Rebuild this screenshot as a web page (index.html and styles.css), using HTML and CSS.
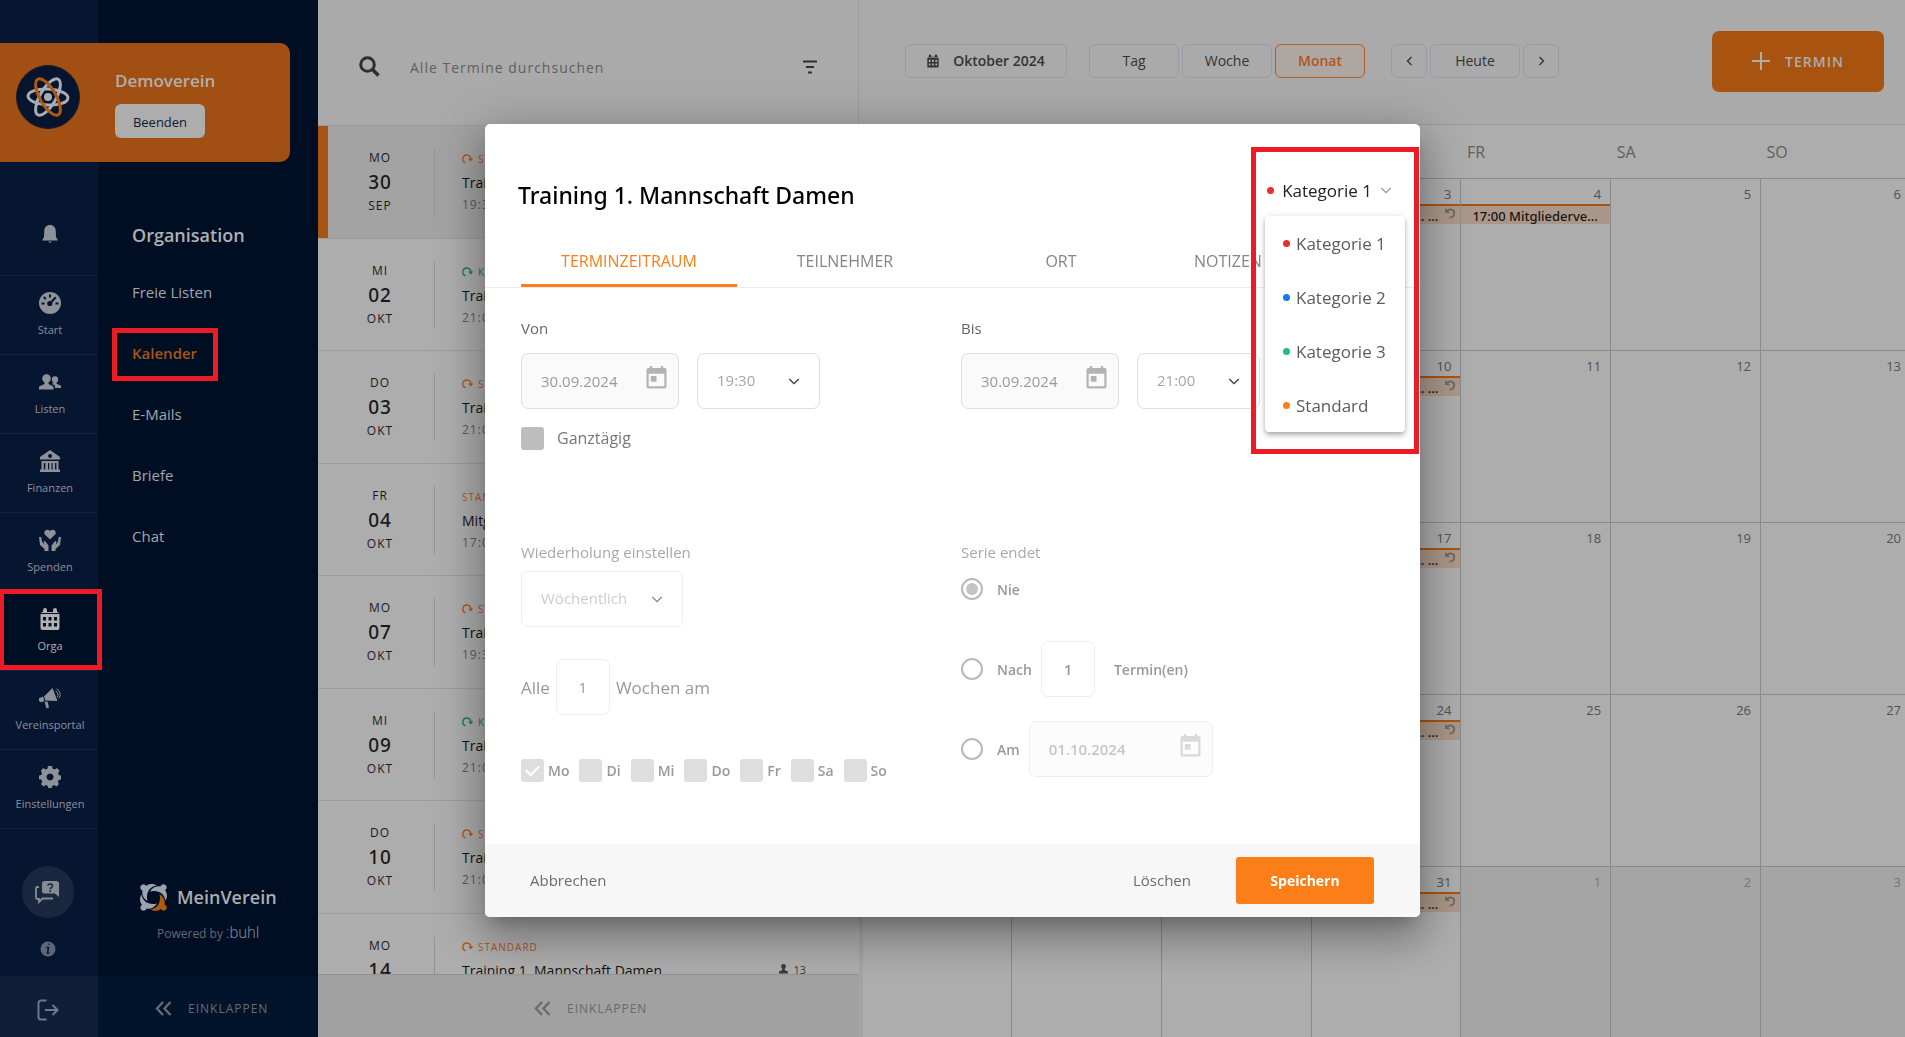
FILE: index.html
```html
<!DOCTYPE html>
<html lang="de">
<head>
<meta charset="utf-8">
<meta name="viewport" content="width=device-width, initial-scale=1">
<title>MeinVerein – Kalender</title>
<link rel="stylesheet" href="styles.css">
</head>
<body>
<svg class="sprite" aria-hidden="true">
  <symbol id="i-repeat" viewBox="0 0 12 10"><path d="M3.500 8.600H3A4 4 0 1 1 8.800 5.400" fill="none" stroke="currentColor" stroke-width="1.300"/><path d="M6.200 4.400h5L8.800 7.400z" fill="currentColor"/></symbol>
  <symbol id="i-undo" viewBox="0 0 12 12"><path d="M1 1v5h5z" fill="currentColor"/><path d="M3 3.600c4-2.400 7.600-.4 7.200 3C10 8.800 8 10.400 5.400 10.600" fill="none" stroke="currentColor" stroke-width="1.800"/></symbol>
  <symbol id="i-person" viewBox="0 0 10 11"><circle cx="5" cy="2.700" r="2.700" fill="currentColor"/><path d="M3.600 4h2.800v2.600L10 8.200V10.500H0V8.200l3.600-1.600z" fill="currentColor"/></symbol>
  <symbol id="i-down" viewBox="0 0 14 8"><path d="M1.500 1l5.500 5.500L12.500 1" fill="none" stroke="currentColor" stroke-width="1.500"/></symbol>
  <symbol id="i-double" viewBox="0 0 18 16"><path d="M8.500 1L2 8l6.500 7M16.500 1L10 8l6.500 7" fill="none" stroke="currentColor" stroke-width="2.400"/></symbol>
  <symbol id="i-date" viewBox="0 0 22 24"><path fill="currentColor" fill-rule="evenodd" d="M4 0h2.500v2h9V0H18v2h1.500A2 2 0 0 1 21.500 4v17.500a2 2 0 0 1-2 2h-17a2 2 0 0 1-2-2V4a2 2 0 0 1 2-2H4zM2.800 8v13.200h16.400V8zM5 10.500h6V16.500H5z"/></symbol>
  <symbol id="i-cal" viewBox="0 0 20 22"><path fill="currentColor" fill-rule="evenodd" d="M3 2a2 2 0 0 1 4 0v2h6V2a2 2 0 0 1 4 0v2h1.500v1H1.500V4H3zM0.500 6h19v14a2 2 0 0 1-2 2h-15a2 2 0 0 1-2-2zM3 9v3.500h3V9zm5.500 0v3.500h3V9zM14 9v3.500h3V9zM3 15v3.500h3V15zm5.500 0v3.500h3V15zm5.500 0v3.500h3V15z"/></symbol>
</svg>

<div class="app">
  <div class="sidebar">
    <nav class="rail" aria-label="Hauptnavigation">
      <ul class="rail-list">
        <li><a href="#" class="rail-item bell" aria-label="Benachrichtigungen">
          <svg width="16" height="18" viewBox="0 0 16 18"><path fill="currentColor" d="M8 0c3.600 0 5.600 2.400 5.800 6l.2 6 2 3.600H0L2 12l.2-6C2.400 2.400 4.400 0 8 0zM6 16.500h4L8 18z"/></svg></a></li>
        <li><a href="#" class="rail-item">
          <svg width="22" height="22" viewBox="0 0 22 22"><circle cx="11" cy="11" r="11" fill="currentColor"/><g stroke="#061631" stroke-width="2" fill="none"><path d="M2.500 11.500h3M16.500 11.500h3M11 2.500v3M4.800 5l2 2M11 11.500L16.800 5.200"/></g><circle cx="10.800" cy="11.500" r="2.600" fill="#061631"/></svg>
          <span>Start</span></a></li>
        <li><a href="#" class="rail-item">
          <svg width="22" height="22" viewBox="0 0 22 22"><g fill="currentColor"><circle cx="7.500" cy="7.500" r="4.300"/><path d="M5.500 10h4v3l5 2.500V18.500H0v-3L5.500 13z"/><circle cx="16" cy="8.500" r="3.200"/><path d="M14.800 11h2.800v1.800l4.400 2V17h-6v-2.400l-3-1.600z"/></g></svg>
          <span>Listen</span></a></li>
        <li><a href="#" class="rail-item">
          <svg width="22" height="22" viewBox="0 0 22 22"><path fill="currentColor" fill-rule="evenodd" d="M11 0l10 7v2.500H1V7zM11 4a2 2 0 1 0 .1 0zM2.500 11h17v8.500H21V22H1v-2.500h1.500zM4.800 13v6.500h1.500V13zm4.200 0v6.500h1.200V13zm3.500 0v6.500h1.200V13zm3.500 0v6.500h1.400V13z"/></svg>
          <span>Finanzen</span></a></li>
        <li><a href="#" class="rail-item">
          <svg width="22" height="22" viewBox="0 0 22 22"><g fill="currentColor"><path d="M11 10.500L5.800 5.500C3.800 3 7.500-1.500 11 2c3.500-3.500 7.200 1 5.200 3.500z"/><path d="M0 8l2.200 0 1 5 2 2.600L4.500 12.500 6 12l3.500 4.500V22H5.500V20L1 16zM22 8l-2.200 0-1 5-2 2.600.7-3.100L16 12l-3.500 4.500V22h4V20L21 16z"/></g></svg>
          <span>Spenden</span></a></li>
        <li><a href="#" class="rail-item active" aria-current="page">
          <svg width="20" height="22"><use href="#i-cal"/></svg>
          <span>Orga</span></a></li>
        <li><a href="#" class="rail-item">
          <svg width="22" height="22" viewBox="0 0 22 22"><g fill="currentColor"><path d="M13.500 1L18.500 14 6.500 13.500 5 9.500z"/><path d="M4 9.500L5.500 14 2 15.200A2.500 2.500 0 0 1 .4 11z"/><path d="M5.500 14.800l3-.3L10 20.500l-2.500 1z"/></g><path d="M16.500 4a4 4 0 0 1 1.700 6M17.500 1.800a6.500 6.500 0 0 1 2.500 9.500" fill="none" stroke="currentColor"/></svg>
          <span>Vereinsportal</span></a></li>
        <li><a href="#" class="rail-item">
          <svg width="22" height="22" viewBox="0 0 22 22"><path fill="currentColor" fill-rule="evenodd" d="M9 0h4l.6 2.800 2 .8L18 2l2.500 2.800-1.400 2.400.8 2 2.100.4v3.800l-2.300.5-.8 1.800L20 18l-2.500 2.500-2.400-1.400-1.800.8L12.800 22H9.200l-.5-2.100-1.800-.8L4.500 20.500 2 18l1.300-2.300-.8-1.900L0 13.300V9.600l2.300-.5.8-1.900L1.800 4.800 4.300 2l2.300 1.500 1.800-.8zM11 7.500a3.500 3.500 0 1 0 .1 0z"/></svg>
          <span>Einstellungen</span></a></li>
      </ul>
      <div class="rail-extra">
        <button class="help" aria-label="Hilfe"><svg width="26" height="24" viewBox="0 0 26 24"><path fill="currentColor" fill-rule="evenodd" d="M9.500 1h12A2.500 2.500 0 0 1 24 3.500v13.500l-4-3.500H9.500A2.500 2.500 0 0 1 7 11V3.500A2.500 2.500 0 0 1 9.500 1z"/><path d="M12.800 5.600c.6-2.200 5-2 4.800.4-.2 1.600-2.300 1.500-2.300 3.200M15.200 10.300v1.700" fill="none" stroke="#19273f" stroke-width="1.600"/><path d="M4 7H2.500A1.500 1.500 0 0 0 1 8.500v9A1.500 1.500 0 0 0 2.500 19H4v3l3.500-3.500H18" fill="none" stroke="currentColor" stroke-width="1.800"/></svg></button>
        <button class="info" aria-label="Info"><svg width="16" height="16" viewBox="0 0 16 16"><circle cx="8" cy="8" r="7.500" fill="currentColor"/><path d="M8.500 3.200h1.200M6.300 6.500H8.600L7.500 12h1.800" fill="none" stroke="#061631" stroke-width="1.500"/></svg></button>
      </div>
      <button class="logout" aria-label="Abmelden"><svg width="22" height="22" viewBox="0 0 22 22"><path d="M9.500 1.500H4A2.500 2.500 0 0 0 1.500 4v14A2.500 2.500 0 0 0 4 20.500h5.500M8 11h12M15.500 6l5 5-5 5" fill="none" stroke="currentColor" stroke-width="2"/></svg></button>
    </nav>

    <div class="sub">
      <nav class="sub-nav" aria-label="Organisation">
        <h2>Organisation</h2>
        <a href="#">Freie Listen</a>
        <a href="#" class="current">Kalender</a>
        <a href="#">E-Mails</a>
        <a href="#">Briefe</a>
        <a href="#">Chat</a>
      </nav>
      <div class="brand">
        <div class="brand-name">
          <svg width="27" height="27" viewBox="0 0 27 27"><defs><path id="fig" d="M19.500 10C24 13 25.300 16.500 24.500 20.500 27.500 21.500 27.500 25.500 24.500 26.500 22.800 27 21.500 26 21 25 17.500 27.500 13.500 27.500 10.500 25.500 17.500 24.500 21.500 18 19.500 10z"/></defs><g fill="#9aa3ae"><use href="#fig" transform="rotate(90 13.500 13.500)"/><use href="#fig" transform="rotate(180 13.500 13.500)"/><use href="#fig" transform="rotate(270 13.500 13.500)"/></g><use href="#fig" fill="#ad5813"/></svg>
          <span>MeinVerein</span>
        </div>
        <p>Powered by <span class="buhl">:buhl</span></p>
      </div>
      <button class="collapse dark"><svg width="17" height="15"><use href="#i-double"/></svg>EINKLAPPEN</button>
    </div>

    <div class="club">
      <svg width="64" height="64" viewBox="0 0 64 64"><circle cx="32" cy="32" r="31.500" fill="#06142d" stroke="#1c1f28"/><g fill="none" stroke-width="3"><ellipse cx="32" cy="32" rx="20" ry="8" stroke="#a7acb5" transform="rotate(3 32 32)"/><ellipse cx="32" cy="32" rx="20.500" ry="8" stroke="#a7acb5" transform="rotate(-60 32 32)"/><ellipse cx="32" cy="32" rx="20.500" ry="8" stroke="#b15a14" transform="rotate(60 32 32)"/></g><circle cx="32" cy="32" r="4" fill="#a7acb5"/></svg>
      <div class="club-text">
        <strong>Demoverein</strong>
        <button>Beenden</button>
      </div>
    </div>
  </div>

  <section class="agenda" aria-label="Termine">
    <div class="search">
      <svg width="21" height="21" viewBox="0 0 21 21"><circle cx="8.500" cy="8.500" r="6.800" fill="none" stroke="currentColor" stroke-width="3"/><path d="M13 13l6.500 6.500" stroke="currentColor" stroke-width="3.600"/></svg>
      <input type="search" placeholder="Alle Termine durchsuchen" aria-label="Alle Termine durchsuchen">
      <button aria-label="Filter"><svg width="16" height="14" viewBox="0 0 16 14"><path d="M1 1.500h14M4 7h8M6 12.500h4" stroke="currentColor" stroke-width="2.200"/></svg></button>
    </div>
    <ul class="events">
      <li class="event selected"><div class="date"><span>MO</span><b>30</b><span>SEP</span></div><div class="what"><span class="cat"><svg width="12" height="10"><use href="#i-repeat"/></svg>STANDARD</span><span class="name">Training 1. Mannschaft Damen</span><span class="time">19:30 - 21:00</span></div></li>
      <li class="event"><div class="date"><span>MI</span><b>02</b><span>OKT</span></div><div class="what"><span class="cat green"><svg width="12" height="10"><use href="#i-repeat"/></svg>KATEGORIE 3</span><span class="name">Training</span><span class="time">21:00</span></div></li>
      <li class="event"><div class="date"><span>DO</span><b>03</b><span>OKT</span></div><div class="what"><span class="cat"><svg width="12" height="10"><use href="#i-repeat"/></svg>STANDARD</span><span class="name">Training</span><span class="time">21:00</span></div></li>
      <li class="event"><div class="date"><span>FR</span><b>04</b><span>OKT</span></div><div class="what"><span class="cat">STANDARD</span><span class="name">Mitgliederversammlung</span><span class="time">17:00</span></div></li>
      <li class="event"><div class="date"><span>MO</span><b>07</b><span>OKT</span></div><div class="what"><span class="cat"><svg width="12" height="10"><use href="#i-repeat"/></svg>STANDARD</span><span class="name">Training 1. Mannschaft Damen</span><span class="time">19:30 - 21:00</span></div></li>
      <li class="event"><div class="date"><span>MI</span><b>09</b><span>OKT</span></div><div class="what"><span class="cat green"><svg width="12" height="10"><use href="#i-repeat"/></svg>KATEGORIE 3</span><span class="name">Training</span><span class="time">21:00</span></div></li>
      <li class="event"><div class="date"><span>DO</span><b>10</b><span>OKT</span></div><div class="what"><span class="cat"><svg width="12" height="10"><use href="#i-repeat"/></svg>STANDARD</span><span class="name">Training</span><span class="time">21:00</span></div></li>
      <li class="event"><div class="date"><span>MO</span><b>14</b><span>OKT</span></div><div class="what"><span class="cat"><svg width="12" height="10"><use href="#i-repeat"/></svg>STANDARD</span><span class="name">Training 1. Mannschaft Damen</span><span class="time">19:30 - 21:00</span></div><span class="count"><svg width="9" height="10"><use href="#i-person"/></svg>13</span></li>
    </ul>
    <button class="collapse light"><svg width="17" height="15"><use href="#i-double"/></svg>EINKLAPPEN</button>
  </section>

  <main class="calendar">
    <header class="toolbar">
      <button class="chip month"><svg width="12" height="14"><use href="#i-cal"/></svg>Oktober 2024</button>
      <div class="group views"><button class="chip">Tag</button><button class="chip">Woche</button><button class="chip on">Monat</button></div>
      <div class="group"><button class="chip step" aria-label="Zurück"><svg width="7" height="10" viewBox="0 0 7 10"><path d="M5.500 1l-4 4 4 4" fill="none" stroke="currentColor" stroke-width="1.400"/></svg></button><button class="chip">Heute</button><button class="chip step" aria-label="Weiter"><svg width="7" height="10" viewBox="0 0 7 10"><path d="M1.500 1l4 4-4 4" fill="none" stroke="currentColor" stroke-width="1.400"/></svg></button></div>
      <button class="add"><svg width="18" height="18" viewBox="0 0 18 18"><path d="M9 0v18M0 9h18" stroke="currentColor" stroke-width="2"/></svg>TERMIN</button>
    </header>
    <div class="month-view">
      <table>
        <thead><tr><th>MO</th><th>DI</th><th>MI</th><th>DO</th><th>FR</th><th>SA</th><th>SO</th></tr></thead>
        <tbody>
          <tr><td class="out">30</td><td>1</td><td>2</td><td>3<div class="entry"><span>21:00 Training 2. Mannschaft</span><svg width="12" height="12"><use href="#i-undo"/></svg></div></td><td>4<div class="entry"><span>17:00 Mitgliederversammlung</span></div></td><td>5</td><td>6</td></tr>
          <tr><td>7</td><td>8</td><td>9</td><td>10<div class="entry"><span>21:00 Training 2. Mannschaft</span><svg width="12" height="12"><use href="#i-undo"/></svg></div></td><td>11</td><td>12</td><td>13</td></tr>
          <tr><td>14</td><td>15</td><td>16</td><td>17<div class="entry"><span>21:00 Training 2. Mannschaft</span><svg width="12" height="12"><use href="#i-undo"/></svg></div></td><td>18</td><td>19</td><td>20</td></tr>
          <tr><td>21</td><td>22</td><td>23</td><td>24<div class="entry"><span>21:00 Training 2. Mannschaft</span><svg width="12" height="12"><use href="#i-undo"/></svg></div></td><td>25</td><td>26</td><td>27</td></tr>
          <tr><td>28</td><td>29</td><td>30</td><td>31<div class="entry"><span>21:00 Training 2. Mannschaft</span><svg width="12" height="12"><use href="#i-undo"/></svg></div></td><td class="out">1</td><td class="out">2</td><td class="out">3</td></tr>
        </tbody>
      </table>
    </div>
  </main>
</div>

<div class="stage">
  <form class="dialog" role="dialog" aria-labelledby="dialog-title">
    <div class="dialog-head">
      <h1 id="dialog-title">Training 1. Mannschaft Damen</h1>
      <div class="picker">
        <button type="button" class="picker-button" aria-haspopup="listbox" aria-expanded="true"><i class="dot red"></i>Kategorie 1<svg width="12" height="7"><use href="#i-down"/></svg></button>
        <ul class="menu" role="listbox">
          <li role="option" aria-selected="true"><i class="dot red"></i>Kategorie 1</li>
          <li role="option"><i class="dot blue"></i>Kategorie 2</li>
          <li role="option"><i class="dot teal"></i>Kategorie 3</li>
          <li role="option"><i class="dot orange"></i>Standard</li>
        </ul>
      </div>
    </div>
    <div class="tabs" role="tablist">
      <button type="button" role="tab" class="on" aria-selected="true">TERMINZEITRAUM</button>
      <button type="button" role="tab">TEILNEHMER</button>
      <button type="button" role="tab">ORT</button>
      <button type="button" role="tab" class="last">NOTIZEN</button>
    </div>
    <div class="dialog-body">
      <div class="pair">
        <div>
          <label class="caption" for="from-date">Von</label>
          <div class="line">
            <div class="field"><input class="date-in" id="from-date" type="text" value="30.09.2024"><svg class="date-icon" width="21" height="23"><use href="#i-date"/></svg></div>
            <div class="field"><select class="time-in" aria-label="Von Uhrzeit"><option>19:30</option></select><svg class="caret" width="12" height="7"><use href="#i-down"/></svg></div>
          </div>
          <label class="all-day"><input type="checkbox">Ganztägig</label>
        </div>
        <div>
          <label class="caption" for="to-date">Bis</label>
          <div class="line">
            <div class="field"><input class="date-in" id="to-date" type="text" value="30.09.2024"><svg class="date-icon" width="21" height="23"><use href="#i-date"/></svg></div>
            <div class="field"><select class="time-in" aria-label="Bis Uhrzeit"><option>21:00</option></select><svg class="caret" width="12" height="7"><use href="#i-down"/></svg></div>
          </div>
        </div>
      </div>
      <div class="pair series">
        <div>
          <label class="caption" for="repeat">Wiederholung einstellen</label>
          <div class="line">
            <div class="field"><select class="repeat-in" id="repeat"><option>Wöchentlich</option></select><svg class="caret" width="12" height="7"><use href="#i-down"/></svg></div>
          </div>
          <label class="every">Alle <input class="num" type="text" value="1"> Wochen am</label>
          <div class="days">
            <label><input type="checkbox" checked>Mo</label>
            <label><input type="checkbox">Di</label>
            <label><input type="checkbox">Mi</label>
            <label><input type="checkbox">Do</label>
            <label><input type="checkbox">Fr</label>
            <label><input type="checkbox">Sa</label>
            <label><input type="checkbox">So</label>
          </div>
        </div>
        <fieldset>
          <legend class="caption">Serie endet</legend>
          <div class="end"><label><input type="radio" name="end" checked>Nie</label></div>
          <div class="end tall"><label><input type="radio" name="end">Nach</label><input class="num" id="count" type="text" value="1"><label for="count" class="unit">Termin(en)</label></div>
          <div class="end tall"><label><input type="radio" name="end">Am</label><div class="field"><input class="date-in wide" type="text" value="01.10.2024" aria-label="Enddatum"><svg class="date-icon" width="21" height="23"><use href="#i-date"/></svg></div></div>
        </fieldset>
      </div>
    </div>
    <div class="dialog-foot">
      <button type="button" class="plain">Abbrechen</button>
      <button type="button" class="plain push">Löschen</button>
      <button type="submit" class="save">Speichern</button>
    </div>
    <div class="frame" aria-hidden="true"></div>
  </form>
</div>
</body>
</html>
```
FILE: styles.css
```css
:root {
  --rail: #061631;
  --navy: #000e24;
  --orange-dim: #a85412;
  --orange: #fc7e19;
  --mark: #ed1c24;
  --grey: #adadad;
  --line-dim: #9c9c9c;
}

* { box-sizing: border-box; }

body {
  margin: 0;
  font-family: "Open Sans", "Noto Sans", sans-serif;
  font-size: 15px;
  background: var(--grey);
}

button, input, select { font: inherit; color: inherit; margin: 0; }
button { background: none; border: 0; padding: 0; }
a { color: inherit; text-decoration: none; }
ul { list-style: none; margin: 0; padding: 0; }
.sprite { display: none; }
svg { flex: none; display: block; }

.app { display: flex; height: 100vh; overflow: hidden; }

/* sidebar */
.sidebar { position: relative; display: flex; flex: none; width: 318px; }
.rail {
  display: flex;
  flex-direction: column;
  width: 98px;
  padding-top: 197px;
  background: var(--rail);
  color: #8d9199;
}
.rail-item {
  position: relative;
  display: flex;
  flex-direction: column;
  align-items: center;
  gap: 8px;
  height: 79px;
  padding: 16px 0 0 2px;
  border-bottom: 1px solid #14233d;
  font-size: 11px;
  line-height: 16px;
}
.bell { padding-top: 28px; }
.rail-item.active { background: var(--navy); color: #b0b0b0; }
.rail-item.active::after {
  content: "";
  position: absolute;
  inset: -3px -4px 0 -1px;
  border: 5px solid var(--mark);
  z-index: 2;
}
.rail-extra {
  flex: 1;
  display: flex;
  flex-direction: column;
  align-items: center;
  justify-content: flex-end;
  gap: 23px;
  padding: 0 2px 19px 0;
}
.help {
  display: grid;
  place-items: center;
  width: 52px;
  height: 52px;
  border-radius: 50%;
  background: #19273f;
  color: #868c96;
}
.info { color: #5c6677; }
.logout {
  display: grid;
  place-items: center;
  height: 61px;
  padding: 6px 2px 0 0;
  background: #101f38;
  color: #70798a;
}

.sub {
  display: flex;
  flex-direction: column;
  flex: 1;
  background: var(--navy);
  color: #a3a6ab;
}
.sub-nav {
  flex: 1;
  display: flex;
  flex-direction: column;
  align-items: flex-start;
  padding: 220px 0 0 34px;
}
.sub-nav h2 {
  margin: 0 0 12px;
  color: #b0b0b0;
  font-size: 18px;
  font-weight: 600;
  line-height: 30px;
}
.sub-nav a { line-height: 61px; font-size: 15px; }
.sub-nav .current { position: relative; color: var(--orange-dim); font-weight: 600; }
.sub-nav .current::after {
  content: "";
  position: absolute;
  inset: 5px -21px 3px -20px;
  border: 5px solid var(--mark);
}
.brand { padding: 0 0 30px 42px; }
.brand-name {
  display: flex;
  align-items: center;
  gap: 10px;
  font-size: 18px;
  font-weight: 600;
  line-height: 28px;
  color: #adadad;
}
.brand p { margin: 10px 0 0 17px; font-size: 12px; line-height: 24px; color: #626a78; }
.buhl { font: 300 16px/24px Roboto, sans-serif; color: #7c8490; }

.collapse {
  display: flex;
  align-items: center;
  gap: 16px;
  font-size: 12px;
  letter-spacing: 1px;
}
.collapse.dark { height: 61px; padding: 4px 0 0 57px; background: #02132c; color: #666b75; }
.collapse.light {
  height: 63px;
  padding: 5px 0 0 216px;
  background: #a1a1a1;
  border-top: 1px solid #929292;
  color: #6a6a6a;
}

.club {
  position: absolute;
  top: 43px;
  left: 0;
  display: flex;
  gap: 35px;
  width: 290px;
  height: 119px;
  padding: 22px 0 0 16px;
  border-radius: 0 10px 10px 0;
  background: #a14f12;
}
.club-text { display: flex; flex-direction: column; align-items: flex-start; gap: 11px; padding-top: 3px; }
.club strong { color: #b0b0b0; font-size: 17px; line-height: 25px; font-weight: 600; }
.club button {
  width: 90px;
  height: 34px;
  padding-top: 2px;
  border-radius: 6px;
  background: #adadad;
  color: #0b1933;
  font-size: 13px;
}

/* event list */
.agenda { display: flex; flex-direction: column; flex: none; width: 541px; }
.search {
  display: flex;
  align-items: center;
  flex: none;
  height: 126px;
  padding: 8px 40px 0 41px;
  background: #aaa;
  border-right: 1px solid var(--line-dim);
  border-bottom: 1px solid #999;
  color: #2f2f2f;
}
.search input {
  flex: 1;
  min-width: 0;
  margin-left: 30px;
  padding: 2px 0 0;
  border: 0;
  background: none;
  letter-spacing: 1px;
  font-size: 14px;
}
.search input::placeholder { color: #5f5f5f; opacity: 1; }
.events { flex: 1; min-height: 0; overflow: hidden; background: var(--grey); }
.event {
  display: flex;
  height: 113px;
  padding: 22px 53px 0 8px;
  border-bottom: 1px solid var(--line-dim);
}
.event:nth-child(even) { height: 112px; }
.event.selected { box-shadow: inset 10px 0 0 var(--orange-dim); background: #a3a3a3; }
.date {
  display: flex;
  flex-direction: column;
  align-items: center;
  width: 109px;
  height: 68px;
  padding-top: 1px;
  border-right: 1px solid #949494;
  color: #191919;
  font-size: 12px;
  line-height: 18px;
  letter-spacing: 1px;
}
.date b { padding-top: 1px; font: 500 19px/29px "Noto Sans", sans-serif; }
.what { flex: 1; padding: 1px 0 0 27px; }
.what span { display: block; white-space: nowrap; }
.what .cat {
  display: flex;
  gap: 4px;
  align-items: center;
  color: #b0541c;
  font-size: 10px;
  line-height: 20px;
  letter-spacing: 1px;
}
.what .cat.green { color: #147a62; }
.what .name { color: #111; font-size: 14px; line-height: 28px; }
.what .time { color: #5a5a5a; font-size: 12px; line-height: 16px; letter-spacing: 1px; }
.count { display: flex; gap: 5px; align-items: center; height: 66px; color: #3b3b3b; font-size: 11px; }

/* month view */
.calendar { flex: 1; min-width: 0; display: flex; flex-direction: column; background: var(--grey); }
.toolbar {
  display: flex;
  align-items: center;
  flex: none;
  height: 125px;
  padding: 0 21px 2px 46px;
  border-bottom: 1px solid #999;
  background: #aaa;
  color: #333;
}
.group { display: flex; gap: 3px; }
.views { margin: 0 26px 0 22px; }
.chip {
  display: flex;
  align-items: center;
  justify-content: center;
  gap: 14px;
  width: 90px;
  height: 34px;
  padding-bottom: 1px;
  border: 1px solid #9a9aa4;
  border-radius: 6px;
  font-size: 14px;
}
.month { width: 162px; font-weight: 600; }
.step { width: 36px; }
.chip.on { border-color: #b0601f; background: #ada6a2; color: #b0541c; font-weight: 600; }
.add {
  display: flex;
  align-items: center;
  justify-content: center;
  gap: 15px;
  width: 172px;
  height: 61px;
  margin-left: auto;
  border-radius: 7px;
  background: #a95311;
  color: #adadad;
  font-size: 14px;
  font-weight: 600;
  letter-spacing: 1px;
}
.month-view { flex: 1; min-height: 0; overflow: hidden; border-left: 4px solid #a4a4a4; }
table { width: calc(100% + 8px); margin-left: -2px; border-collapse: collapse; table-layout: fixed; }
th {
  height: 53px;
  padding: 1px 0 0 6px;
  text-align: left;
  font-size: 16px;
  font-weight: 400;
  color: #5e5e5e;
}
td {
  height: 172px;
  padding: 6px 9px 0 0;
  border: 1px solid #8a8a8a;
  vertical-align: top;
  text-align: right;
  color: #515151;
  font-size: 13px;
  line-height: 19px;
}
td.out { background: #a5a5a5; color: #757575; }
.entry {
  display: flex;
  height: 20px;
  margin-right: -9px;
  padding: 0 4px 0 11px;
  border-top: 2px solid #a85412;
  background: #ab9789;
  color: #151515;
  text-align: left;
  font: 500 13px/20px "Noto Sans", sans-serif;
}
.entry span { flex: 1; min-width: 0; overflow: hidden; text-overflow: ellipsis; white-space: nowrap; padding-right: 6px; }
.entry svg { color: #6e6a68; margin-top: 1px; }

/* dialog */
.stage {
  position: fixed;
  inset: 0;
  display: flex;
  align-items: center;
  justify-content: center;
  padding-top: 4px;
}
.dialog {
  position: relative;
  width: 935px;
  border-radius: 5px;
  background: #fff;
  box-shadow: 0 11px 15px -7px rgba(0, 0, 0, .2), 0 24px 38px 3px rgba(0, 0, 0, .14), 0 9px 46px 8px rgba(0, 0, 0, .22);
  color: #666;
}
.dialog-head { display: flex; justify-content: space-between; padding: 50px 28px 0 33px; }
.dialog h1 { margin: 0; color: #000; font: 500 23px/42px "Noto Sans", sans-serif; }
.picker { position: relative; }
.picker-button {
  display: flex;
  align-items: center;
  gap: 8px;
  height: 32px;
  color: #222;
  font-size: 17px;
}
.picker-button svg { color: #999; }
.dot { width: 7px; height: 7px; border-radius: 50%; flex: none; }
.red { background: #e53030; }
.blue { background: #1777f2; }
.teal { background: #20b996; }
.orange { background: var(--orange); }
.menu {
  position: absolute;
  top: 42px;
  right: -13px;
  width: 140px;
  border-radius: 4px;
  background: #fff;
  box-shadow: 0 2px 4px -1px rgba(0, 0, 0, .2), 0 4px 5px rgba(0, 0, 0, .14), 0 1px 10px rgba(0, 0, 0, .12);
  z-index: 2;
}
.menu li {
  display: flex;
  align-items: center;
  gap: 6px;
  height: 54px;
  padding-left: 18px;
  color: #5c5c5c;
  font-size: 17px;
}
.tabs {
  display: grid;
  grid-template-columns: repeat(4, 1fr);
  margin-top: 18px;
  padding: 0 35px 0 36px;
  border-bottom: 1px solid #ececec;
}
.tabs button { height: 53px; padding-top: 3px; border-bottom: 3px solid transparent; color: #858585; font-size: 16px; }
.tabs .on { border-color: var(--orange); color: var(--orange); }
.tabs .last { text-align: left; padding-left: 25px; }

.dialog-body { padding: 28px 19px 55px 36px; }
.pair { display: grid; grid-template-columns: 1fr 1fr; }
.caption { display: block; padding: 0; font-size: 15px; line-height: 24px; color: #666; }
.line { display: flex; gap: 18px; padding-top: 13px; }
.field { display: grid; align-items: center; }
.field > * { grid-area: 1 / 1; }
.field svg { justify-self: end; pointer-events: none; }
.date-icon { margin: 0 12px 8px 0; color: #b3b3b3; }
.caret { margin-right: 20px; color: #333; }
.date-in, .time-in, .repeat-in, .num {
  height: 56px;
  padding: 0 19px;
  border: 1px solid #dedeec;
  border-radius: 7px;
  background: #fff;
  color: #999;
  font-size: 15px;
  appearance: none;
}
.date-in { width: 158px; background: #fafafa; }
.time-in { width: 123px; color: #a5a5a5; }
.repeat-in { width: 162px; color: #ccc; }
.time-in, .repeat-in { padding-bottom: 2px; }
.num { width: 54px; padding: 0; text-align: center; }
input[type="checkbox"], input[type="radio"] { appearance: none; flex: none; }
input[type="checkbox"] { width: 23px; height: 23px; border-radius: 3px; background: #bdbdbd; }
.all-day { display: flex; align-items: center; gap: 13px; height: 24px; margin-top: 17px; font-size: 16px; color: #777; }

.series { margin-top: 90px; color: #999; }
.series .caption { color: #a8a8a8; }
.series .line { padding-top: 7px; }
.series .date-in, .series .repeat-in, .series .num { border-color: #eee; }
.series .caret { color: #888; }
.series .date-in { color: #c5c5c5; background: #fcfcfc; }
.series .date-icon { color: #dadada; }
.every { display: flex; align-items: center; gap: 6px; margin-top: 32px; font-size: 17px; }
.days { display: flex; gap: 10px; margin-top: 44px; font-size: 14px; font-weight: 600; }
.days label { display: flex; align-items: center; gap: 4px; height: 23px; }
.days input[type="checkbox"] { display: grid; place-items: center; background: #dedede; }
.days input:checked::before {
  content: "";
  width: 11px;
  height: 6px;
  margin-bottom: 4px;
  border: solid #fff;
  border-width: 0 0 2px 2px;
  rotate: -45deg;
}
fieldset { margin: 0; padding: 0; border: 0; min-width: 0; }
.end { display: flex; align-items: center; height: 50px; margin-bottom: 15px; font-size: 14px; font-weight: 600; }
.end.tall { height: 80px; gap: 9px; margin-bottom: 0; }
.end label { display: flex; align-items: center; gap: 14px; }
.end .unit { margin-left: 10px; }
.end input[type="radio"] {
  display: grid;
  place-items: center;
  width: 22px;
  height: 22px;
  border: 2px solid #b9b9b9;
  border-radius: 50%;
}
.end input:checked::before { content: ""; width: 12px; height: 12px; border-radius: 50%; background: #c4c4c4; }
.end .date-in.wide { width: 184px; }

.dialog-foot {
  display: flex;
  align-items: center;
  height: 73px;
  padding: 0 46px 0 45px;
  border-radius: 0 0 5px 5px;
  background: #f7f7f7;
  color: #6b6b6b;
}
.plain { font-size: 15px; line-height: 22px; padding-bottom: 2px; }
.push { margin-left: auto; }
.save {
  width: 138px;
  height: 47px;
  margin-left: 45px;
  border-radius: 3px;
  background: var(--orange);
  color: #fff;
  font-size: 14px;
  font-weight: 700;
}
.frame {
  position: absolute;
  top: 23px;
  right: 1px;
  width: 168px;
  height: 307px;
  border: 5px solid var(--mark);
  pointer-events: none;
}
```
